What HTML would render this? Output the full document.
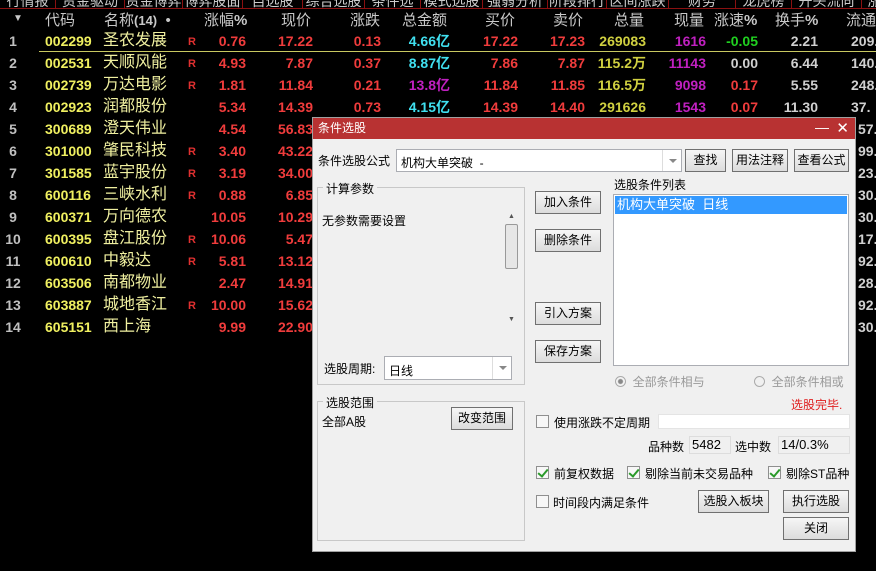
<!DOCTYPE html>
<html><head><meta charset="utf-8"><style>
*{margin:0;padding:0;box-sizing:border-box}
body{width:876px;height:571px;background:#000;position:relative;overflow:hidden;font-family:"Liberation Sans","Noto Sans CJK SC",sans-serif}
.a{position:absolute;white-space:nowrap}
.tabs{position:absolute;left:0;top:0;width:876px;height:9px;border-bottom:1px solid #8a1010;overflow:hidden}
.tab{position:absolute;top:-9px;font-size:14px;color:#ccc;height:18px;border-right:1px solid #8a1010;text-align:center}
.h{font-size:15px;color:#c8c8c8;top:9px}
.r{font-size:14px;font-weight:bold;height:22px;line-height:22px}
.n{color:#c0c0c0}.c{color:#f0f060}.nm{color:#f0f0a0;font-weight:normal;font-size:16px}
.red{color:#f03c3c}.cy{color:#40e0f0}.pu{color:#c020c0}.ye{color:#d0d040}.gr{color:#20d020}.wh{color:#d0d0d0}
.R{color:#e03030;font-size:11px;font-weight:bold}
.dlg{position:absolute;left:312px;top:117px;width:544px;height:435px;background:#f0f0f0;border:1px solid #a0a0a0;font-size:12px;color:#000}
.tb{position:absolute;left:0;top:0;width:100%;height:21px;background:#b83232;color:#fff;font-size:12px;line-height:21px;padding-left:5px}
.btn{position:absolute;border:1px solid #707070;background:linear-gradient(#f6f6f6,#dcdcdc);text-align:center;font-size:12px;line-height:21px}
.box{position:absolute;background:#fff;border:1px solid #abadb3}
.grp{position:absolute;border:1px solid #c8c8c8}
.gl{position:absolute;background:#f0f0f0;padding:0 3px;font-size:12px}
.cb{position:absolute;width:13px;height:13px;border:1px solid #8f8f8f;background:#f7f7f7}
.cb.k::after{content:"";position:absolute;left:3px;top:0px;width:4px;height:8px;border:solid #2a9a2a;border-width:0 2px 2px 0;transform:rotate(40deg)}
.t{position:absolute;font-size:12px;white-space:nowrap}
.dd{position:absolute;top:0;right:0;width:19px;height:100%;border-left:1px solid #ddd}
.dd::after{content:"";position:absolute;left:6px;top:9px;border:4px solid transparent;border-top:4px solid #888}
</style></head><body>
<div class="tabs">
<div class="tab" style="left:0;width:56px">行情报价</div><div class="tab" style="left:56px;width:69px">资金驱动力</div><div class="tab" style="left:125px;width:58px">资金博弈</div><div class="tab" style="left:183px;width:60px">博弈股面</div><div class="tab" style="left:243px;width:60px">自选股</div><div class="tab" style="left:303px;width:62px">综合选股</div><div class="tab" style="left:365px;width:56px">条件选股</div><div class="tab" style="left:421px;width:62px">模式选股</div><div class="tab" style="left:483px;width:65px">强弱分析</div><div class="tab" style="left:548px;width:59px">阶段排行</div><div class="tab" style="left:607px;width:62px">区间涨跌</div><div class="tab" style="left:669px;width:67px">财务</div><div class="tab" style="left:736px;width:56px">龙虎榜</div><div class="tab" style="left:792px;width:70px">开头流向</div><div class="tab" style="left:862px;width:40px">涨停</div>
</div>
<div class="a h" style="left:13px;top:13px;font-size:10px">▼</div>
<div class="a h" style="left:45px">代码</div>
<div class="a h" style="left:104px">名称<b style="font-size:13px">(14)</b> &nbsp;•</div>
<div class="a h" style="left:204px">涨幅<b>%</b></div>
<div class="a h" style="left:281px">现价</div>
<div class="a h" style="left:350px">涨跌</div>
<div class="a h" style="left:402px">总金额</div>
<div class="a h" style="left:485px">买价</div>
<div class="a h" style="left:553px">卖价</div>
<div class="a h" style="left:614px">总量</div>
<div class="a h" style="left:674px">现量</div>
<div class="a h" style="left:714px">涨速<b>%</b></div>
<div class="a h" style="left:775px">换手<b>%</b></div>
<div class="a h" style="left:846px">流通</div>
<div class="a" style="left:39px;top:51px;width:837px;height:1px;background:#c8c860"></div>
<div id="rows"></div>
<script>
var d=[
["1","002299","圣农发展",1,"0.76","17.22","0.13",["4.66亿","cy"],"17.22","17.23","269083","1616",["-0.05","gr"],"2.21","209."],
["2","002531","天顺风能",1,"4.93","7.87","0.37",["8.87亿","cy"],"7.86","7.87","115.2万","11143",["0.00","wh"],"6.44","140."],
["3","002739","万达电影",1,"1.81","11.84","0.21",["13.8亿","pu"],"11.84","11.85","116.5万","9098",["0.17","red"],"5.55","248."],
["4","002923","润都股份",0,"5.34","14.39","0.73",["4.15亿","cy"],"14.39","14.40","291626","1543",["0.07","red"],"11.30","37."],
["5","300689","澄天伟业",0,"4.54","56.83"],["6","301000","肇民科技",1,"3.40","43.22"],["7","301585","蓝宇股份",1,"3.19","34.00"],
["8","600116","三峡水利",1,"0.88","6.85"],["9","600371","万向德农",0,"10.05","10.29"],["10","600395","盘江股份",1,"10.06","5.47"],
["11","600610","中毅达",1,"5.81","13.12"],["12","603506","南都物业",0,"2.47","14.91"],["13","603887","城地香江",1,"10.00","15.62"],["14","605151","西上海",0,"9.99","22.90"]];
var rt=["","","","","57.","99.","23.","30.","30.","17.","92.","28.","92.","30."];
var h="",ys=[30,52,74,96,118,140,162,184,206,228,250,272,294,316];
function cell(x,w,txt,cls,al){return '<div class="a r '+cls+'" style="left:'+x+'px;width:'+w+'px;text-align:'+(al||'right')+';top:'+T+'px">'+txt+'</div>';}
var T;
d.forEach(function(r,i){T=ys[i];
h+=cell(0,26,r[0],"n","center");h+=cell(45,50,r[1],"c","left");h+=cell(103,70,r[2],"c nm","left");
if(r[3])h+='<div class="a R" style="left:188px;top:'+(T+6)+'px">R</div>';
h+=cell(196,50,r[4],"red");h+=cell(250,63,r[5],"red");
if(r.length>6){h+=cell(330,51,r[6],"red");h+=cell(390,60,r[7][0],r[7][1]);h+=cell(460,58,r[8],"red");h+=cell(525,60,r[9],"red");h+=cell(585,61,r[10],"ye");h+=cell(650,56,r[11],"pu");h+=cell(706,52,r[12][0],r[12][1]);h+=cell(760,58,r[13],"wh");h+=cell(851,40,r[14],"wh","left");}
else h+=cell(858,40,rt[i],"wh","left");
});
document.getElementById("rows").innerHTML=h;
</script>
<div class="dlg">
<div class="tb">条件选股<span style="position:absolute;right:26px;top:-1px;font-size:14px">—</span><span style="position:absolute;right:6px;top:0;font-size:15px">✕</span></div>
<div class="t" style="left:5px;top:34px">条件选股公式</div>
<div class="box" style="left:83px;top:31px;width:286px;height:23px"><span class="t" style="left:4px;top:4px">机构大单突破 &nbsp;-</span><div class="dd"></div></div>
<div class="btn" style="left:372px;top:31px;width:41px;height:23px">查找</div>
<div class="btn" style="left:419px;top:31px;width:56px;height:23px">用法注释</div>
<div class="btn" style="left:481px;top:31px;width:55px;height:23px">查看公式</div>
<div class="grp" style="left:4px;top:69px;width:208px;height:198px"></div>
<div class="gl" style="left:10px;top:62px">计算参数</div>
<div class="t" style="left:9px;top:94px">无参数需要设置</div>
<div class="a" style="left:191px;top:88px;width:16px;height:122px;background:#f0f0f0"><div style="position:absolute;left:4px;top:7px;font-size:7px;color:#555">▲</div><div style="position:absolute;left:1px;top:18px;width:13px;height:45px;border:1px solid #999;background:#e6e6e6;border-radius:2px"></div><div style="position:absolute;left:4px;top:110px;font-size:7px;color:#555">▼</div></div>
<div class="t" style="left:11px;top:242px">选股周期:</div>
<div class="box" style="left:71px;top:238px;width:128px;height:24px"><span class="t" style="left:4px;top:5px">日线</span><div class="dd"></div></div>
<div class="btn" style="left:222px;top:73px;width:66px;height:23px">加入条件</div>
<div class="btn" style="left:222px;top:111px;width:66px;height:23px">删除条件</div>
<div class="btn" style="left:222px;top:184px;width:66px;height:23px">引入方案</div>
<div class="btn" style="left:222px;top:222px;width:66px;height:23px">保存方案</div>
<div class="t" style="left:301px;top:58px">选股条件列表</div>
<div class="box" style="left:300px;top:76px;width:236px;height:172px"><div style="position:absolute;left:1px;top:1px;width:232px;height:18px;background:#3399ff;color:#fff;font-size:13px;line-height:18px;padding-left:2px">机构大单突破 &nbsp;日线</div></div>
<div class="t" style="left:302px;top:255px;color:#999"><span style="display:inline-block;width:11px;height:11px;border:1px solid #aaa;border-radius:50%;background:radial-gradient(#888 2px,#f4f4f4 3px);vertical-align:-1px"></span>&nbsp; 全部条件相与</div>
<div class="t" style="left:441px;top:255px;color:#999"><span style="display:inline-block;width:11px;height:11px;border:1px solid #aaa;border-radius:50%;vertical-align:-1px"></span>&nbsp; 全部条件相或</div>
<div class="t" style="left:478px;top:278px;color:#e02020">选股完毕.</div>
<div class="grp" style="left:4px;top:283px;width:208px;height:140px"></div>
<div class="gl" style="left:10px;top:276px">选股范围</div>
<div class="t" style="left:9px;top:295px">全部A股</div>
<div class="btn" style="left:138px;top:289px;width:62px;height:23px">改变范围</div>
<div class="cb" style="left:223px;top:297px"></div><div class="t" style="left:241px;top:296px">使用涨跌不定周期</div>
<div class="a" style="left:345px;top:296px;width:192px;height:15px;background:#fff;border:1px solid #e4e4e4"></div>
<div class="t" style="left:335px;top:320px">品种数</div><div class="a" style="left:376px;top:318px;width:42px;height:18px;border:1px solid #ddd;font-size:13px;padding-left:2px">5482</div>
<div class="t" style="left:422px;top:320px">选中数</div><div class="a" style="left:465px;top:318px;width:72px;height:18px;border:1px solid #ddd;font-size:13px;padding-left:2px">14/0.3%</div>
<div class="cb k" style="left:223px;top:348px"></div><div class="t" style="left:241px;top:347px">前复权数据</div>
<div class="cb k" style="left:314px;top:348px"></div><div class="t" style="left:332px;top:347px">剔除当前未交易品种</div>
<div class="cb k" style="left:455px;top:348px"></div><div class="t" style="left:473px;top:347px">剔除ST品种</div>
<div class="cb" style="left:223px;top:377px"></div><div class="t" style="left:240px;top:376px">时间段内满足条件</div>
<div class="btn" style="left:385px;top:372px;width:71px;height:23px">选股入板块</div>
<div class="btn" style="left:470px;top:372px;width:66px;height:23px">执行选股</div>
<div class="btn" style="left:470px;top:399px;width:66px;height:23px">关闭</div>
</div>
</body></html>
